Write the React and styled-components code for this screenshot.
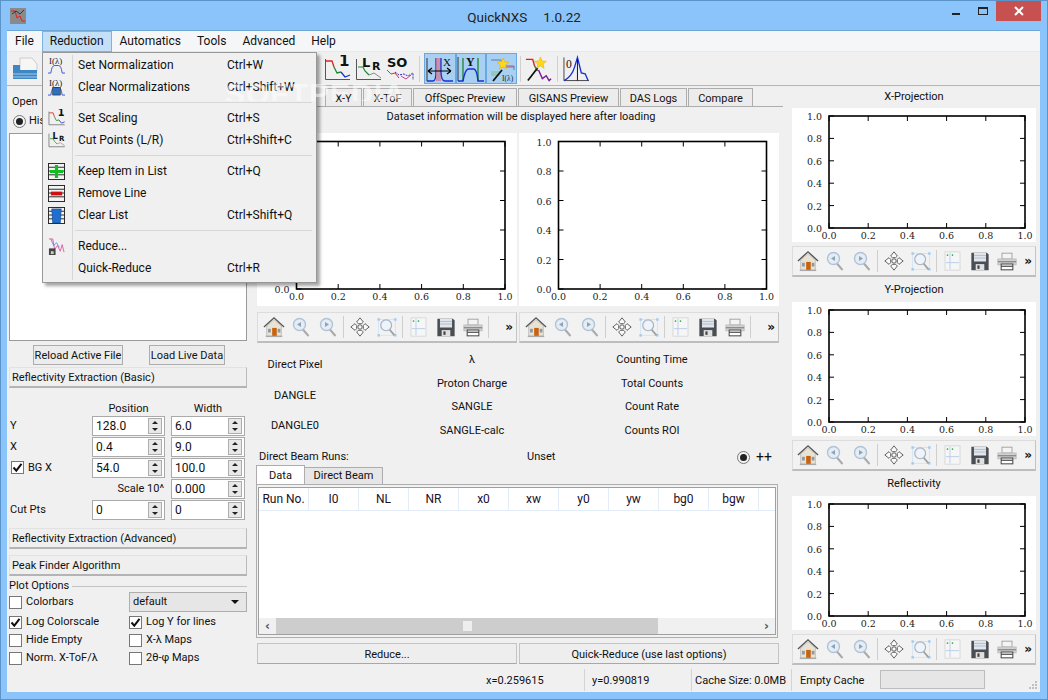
import React from "react";
import styled, { createGlobalStyle } from "styled-components";

const Global = createGlobalStyle`
  html, body { margin: 0; padding: 0; background: #8ac4fa; overflow: hidden; }
  * { box-sizing: border-box; }
`;

const UI = `Roboto, "Open Sans", "Liberation Sans", sans-serif`;

const Window = styled.div`
  position: relative;
  width: 1048px;
  height: 700px;
  background: #8ac4fa;
  border: 1px solid #5b94c8;
  display: flex;
  flex-direction: column;
  font: 11px/16px ${UI};
  color: #111;
  overflow: hidden;
`;
const TitleBar = styled.div`
  height: 29px;
  flex: none;
  display: flex;
  align-items: flex-start;
  position: relative;
`;
const AppIcon = styled.div`
  margin: 7px 0 0 9px;
  width: 16px;
  height: 16px;
  background: #8a8a8a;
  display: flex;
`;
const Title = styled.div`
  position: absolute;
  left: 0;
  right: 0;
  top: 6px;
  text-align: center;
  font-size: 13.5px;
  line-height: 20px;
  word-spacing: 2px;
  color: #222;
  white-space: pre;
`;
const Controls = styled.div`
  margin-left: auto;
  margin-right: 6px;
  display: flex;
  align-items: flex-start;
`;
const WinBtn = styled.div`
  width: 27px;
  height: 20px;
  display: flex;
  align-items: center;
  justify-content: center;
`;
const CloseBtn = styled(WinBtn)`
  width: 45px;
  background: #c75050;
`;
const Client = styled.div`
  margin: 0 7px 0 6px;
  height: 662px;
  background: #f0f0f0;
  display: flex;
  flex-direction: column;
  border-top: 1px solid #6fa5d5;
  position: relative;
`;
const MenuBar = styled.div`
  height: 21px;
  flex: none;
  background: #f5f6f7;
  border-bottom: 1px solid #e8e9ea;
  display: flex;
  font-size: 12px;
`;
const MenuTitle = styled.div`
  padding: 0 7px;
  line-height: 19px;
  height: 21px;
  border: 1px solid ${p => (p.$active ? "#7eb4e2" : "transparent")};
  background: ${p => (p.$active ? "#c4e0f8" : "transparent")};
`;
const ToolBar = styled.div`
  height: 34px;
  flex: none;
  border-bottom: 1px solid #b5b5b5;
  display: flex;
  align-items: center;
  padding-left: 5px;
`;
const ToolBtn = styled.div`
  width: ${p => p.$w || 31}px;
  height: 31px;
  flex: none;
  display: flex;
  align-items: center;
  justify-content: center;
  border: 1px solid ${p => (p.$on ? "#6aa9e0" : "transparent")};
  background: ${p => (p.$on ? "#a8d0f2" : "transparent")};
`;
const ToolSep = styled.div`
  width: 1px;
  height: 26px;
  background: #d0d0d0;
  margin: 0 ${p => p.$m || 4}px;
  flex: none;
`;
const ToolGap = styled.div`
  width: ${p => p.$w}px;
  flex: none;
`;
const Main = styled.div`
  flex: 1;
  display: flex;
  min-height: 0;
`;

/* Left column */
const LeftCol = styled.div`
  width: 245px;
  flex: none;
  padding: 7px 0 0 2px;
  display: flex;
  flex-direction: column;
`;
const OpenLabel = styled.div`
  height: 16px;
  line-height: 18px;
  padding-left: 3px;
`;
const RadioRow = styled.div`
  height: 16px;
  margin-top: 4px;
  padding-left: 4px;
  display: flex;
  align-items: center;
  gap: 3px;
`;
const Radio = styled.span`
  width: 13px;
  height: 13px;
  flex: none;
  border-radius: 50%;
  border: 1px solid #777;
  background: #f4f4f4;
  display: flex;
  align-items: center;
  justify-content: center;
  &::after {
    content: "";
    width: 7px;
    height: 7px;
    border-radius: 50%;
    background: #222;
  }
`;
const ListBox = styled.div`
  margin-top: 4px;
  width: 238px;
  height: 212px;
  background: #fff;
  border: 1px solid #9a9a9a;
`;
const ReloadRow = styled.div`
  display: flex;
  margin-top: 4px;
  padding-left: 24px;
  gap: 26px;
`;
const PushBtn = styled.div`
  height: ${p => p.$h || 21}px;
  width: ${p => (p.$w ? p.$w + "px" : "auto")};
  flex: ${p => (p.$w ? "none" : "1")};
  border: 1px solid #adadad;
  background: #ececec;
  display: flex;
  align-items: center;
  justify-content: ${p => (p.$left ? "flex-start" : "center")};
  padding: 2px ${p => (p.$left ? 2 : 0)}px 0;
  white-space: nowrap;
`;
const SectionBtn = styled(PushBtn)`
  width: 238px;
  flex: none;
  margin-top: ${p => p.$mt || 0}px;
  border-style: solid;
  border-width: 1px 1px 2px 1px;
  border-color: #e2e2e2 #bbb #b4b4b4 #e2e2e2;
  background: #efefef;
`;
const FormHead = styled.div`
  display: grid;
  grid-template-columns: 77px 73px 74px;
  column-gap: 6px;
  margin-top: 12px;
  height: 16px;
`;
const HeadCell = styled.div`
  text-align: center;
  height: 16px;
  line-height: 18px;
  grid-column: ${p => p.$col};
`;
const FormGrid = styled.div`
  display: grid;
  grid-template-columns: 77px 73px 74px;
  column-gap: 6px;
  grid-auto-rows: 20px;
  row-gap: 1px;
  align-items: center;
`;
const FieldLabel = styled.div`
  padding-left: 1px;
  display: flex;
  align-items: center;
  gap: 4px;
  margin-top: -1px;
`;
const BoxLabel = styled(FieldLabel)`
  padding-left: 2px;
`;
const ScaleLabel = styled.div`
  grid-column: 1 / span 2;
  text-align: right;
  padding-right: 1px;
  margin-top: -1px;
`;
const Spin = styled.div`
  height: 20px;
  border: 1px solid #aaa;
  background: #fff;
  display: flex;
  align-items: center;
  padding-left: 3px;
  font-size: 12px;
  justify-content: space-between;
`;
const SpinBtns = styled.div`
  width: 14px;
  height: 16px;
  margin-right: 2px;
  border: 1px solid #adadad;
  background: #e8e8e8;
  display: flex;
  flex-direction: column;
  align-items: center;
  justify-content: space-around;
`;
const Arrow = styled.span`
  width: 0;
  height: 0;
  border-left: 3px solid transparent;
  border-right: 3px solid transparent;
  ${p => (p.$down ? "border-top: 3px solid #222;" : "border-bottom: 3px solid #222;")}
`;
const GroupTitle = styled.div`
  margin-top: 2px;
  height: 16px;
  display: flex;
  align-items: center;
  gap: 3px;
  width: 238px;
  &::after {
    content: "";
    flex: 1;
    height: 1px;
    background: #c4c4c4;
  }
`;
const OptGrid = styled.div`
  display: grid;
  grid-template-columns: 120px 118px;
  grid-template-rows: 22px 18px 18px 18px;
  margin-top: -3px;
  align-items: center;
`;
const CheckItem = styled.div`
  display: flex;
  align-items: center;
  gap: 4px;
  white-space: nowrap;
`;
const Box = styled.span`
  width: 13px;
  height: 13px;
  flex: none;
  background: #fff;
  border: 1px solid #777;
  display: flex;
  align-items: center;
  justify-content: center;
`;
const Combo = styled.div`
  height: 20px;
  border: 1px solid #adadad;
  background: #e6e6e6;
  display: flex;
  align-items: center;
  justify-content: space-between;
  padding: 0 7px 0 3px;
`;
const ComboArrow = styled.span`
  border-left: 4px solid transparent;
  border-right: 4px solid transparent;
  border-top: 4px solid #111;
`;

/* Centre column */
const CenterCol = styled.div`
  width: 533px;
  flex: none;
  padding: 2px 0 0 5px;
  display: flex;
  flex-direction: column;
`;
const TabBar = styled.div`
  height: 19px;
  width: 526px;
  padding-left: ${p => p.$pad || 0}px;
  border-bottom: 1px solid #adadad;
  display: flex;
  flex: none;
`;
const Tab = styled.div`
  height: 18px;
  width: ${p => p.$w}px;
  flex: none;
  border: 1px solid #adadad;
  border-bottom: none;
  margin-right: 1px;
  background: #ececec;
  display: flex;
  align-items: center;
  justify-content: center;
  padding-top: 2px;
  white-space: nowrap;
`;
const InfoLine = styled.div`
  height: 18px;
  text-align: center;
  line-height: 20px;
  flex: none;
`;
const PlotRow = styled.div`
  display: flex;
  gap: 2px;
  margin-top: ${p => p.$mt || 0}px;
`;
const PlotSvg = styled.svg`
  display: block;
  background: #fff;
  flex: none;
`;
const TickText = styled.text`
  font: 9.5px "DejaVu Serif", serif;
  fill: #222;
  stroke: none;
`;
const Mpl = styled.div`
  width: ${p => p.$w}px;
  height: 31px;
  flex: none;
  background: #f2f2f2;
  border: 1px solid #dcdcdc;
  border-bottom: 2px solid #bdbdbd;
  border-right: 1px solid #c4c4c4;
  display: flex;
  align-items: center;
  padding-left: ${p => p.$pad}px;
`;
const MplBtn = styled.div`
  width: 27px;
  height: 26px;
  flex: none;
  display: flex;
  align-items: center;
  justify-content: center;
`;
const MplSep = styled.div`
  width: 1px;
  height: 22px;
  margin: 0 2px;
  background: #cfcfcf;
  flex: none;
`;
const More = styled.div`
  margin-left: auto;
  margin-right: 3px;
  font: bold 12px/14px "DejaVu Sans", sans-serif;
`;
const InfoGrid = styled.div`
  display: grid;
  grid-template-columns: 76px 278px 82px;
  height: 95px;
  flex: none;
  margin-top: 4px;
`;
const InfoCol = styled.div`
  padding-top: ${p => p.$top}px;
  display: flex;
  flex-direction: column;
  align-items: center;
`;
const InfoItem = styled.div`
  height: ${p => p.$h}px;
  line-height: ${p => p.$h}px;
  white-space: nowrap;
`;
const BeamRow = styled.div`
  height: 16px;
  display: flex;
  align-items: center;
  padding: 0 7px 0 2px;
  width: 522px;
  margin-top: 7px;
  flex: none;
`;
const BeamText = styled.div`
  width: ${p => p.$w}px;
  flex: none;
`;
const BeamRadio = styled.div`
  margin-left: auto;
  display: flex;
  align-items: center;
  gap: 6px;
  font-size: 14px;
`;
const SmallTabs = styled.div`
  display: flex;
  height: 20px;
  margin: 0 0 0 -1px;
  align-items: flex-end;
  flex: none;
`;
const SmallTab = styled.div`
  height: ${p => (p.$on ? 20 : 18)}px;
  width: ${p => p.$w}px;
  border: 1px solid #adadad;
  border-bottom: ${p => (p.$on ? "none" : "1px solid #adadad")};
  background: ${p => (p.$on ? "#fff" : "#e6e6e6")};
  display: flex;
  align-items: center;
  justify-content: center;
  margin-left: ${p => (p.$on ? 0 : -1)}px;
`;
const Pane = styled.div`
  width: 522px;
  height: 154px;
  margin: -1px 0 0 -1px;
  border: 1px solid #adadad;
  background: #f2f2f2;
  padding: 2px 1px 2px 1px;
  flex: none;
`;
const TableFrame = styled.div`
  height: 148px;
  border: 1px solid #9f9f9f;
  background: #fff;
  display: flex;
  flex-direction: column;
  overflow: hidden;
`;
const TableHead = styled.div`
  height: 23px;
  flex: none;
  display: flex;
  border-bottom: 1px solid #e3edf8;
  font-size: 12px;
`;
const HeadC = styled.div`
  width: 50px;
  flex: none;
  border-right: 1px solid #e3edf8;
  text-align: center;
  line-height: 23px;
  white-space: nowrap;
  color: #20102a;
`;
const TableBody = styled.div`
  flex: 1;
`;
const HScroll = styled.div`
  height: 16px;
  flex: none;
  background: #f0f0f0;
  display: flex;
  align-items: center;
`;
const ScrollEnd = styled.div`
  width: 17px;
  flex: none;
  display: flex;
  justify-content: center;
  font: bold 12px/14px "DejaVu Sans", sans-serif;
  color: #555;
  margin-left: ${p => (p.$end ? "auto" : 0)};
`;
const Thumb = styled.div`
  width: 382px;
  height: 16px;
  flex: none;
  background: #cdcdcd;
  display: flex;
  align-items: center;
  justify-content: center;
  &::after {
    content: "";
    width: 9px;
    height: 10px;
    background: #eee;
  }
`;
const ReduceRow = styled.div`
  display: flex;
  gap: 2px;
  margin-top: 5px;
  width: 522px;
`;
const WideBtn = styled(PushBtn)`
  border-color: #c4c4c4 #c4c4c4 #a8a8a8;
  background: #eee;
`;

/* Right column */
const RightCol = styled.div`
  flex: 1;
  padding-left: 7px;
  display: flex;
  flex-direction: column;
`;
const PlotHead = styled.div`
  width: 244px;
  height: 16px;
  line-height: 18px;
  margin-top: ${p => p.$mt}px;
  margin-bottom: ${p => p.$mb}px;
  text-align: center;
  flex: none;
`;
const Gap = styled.div`
  height: ${p => p.$h}px;
  flex: none;
`;

/* Status */
const StatusBar = styled.div`
  height: 25px;
  flex: none;
  display: flex;
  align-items: center;
  position: relative;
`;
const StatusCell = styled.div`
  width: ${p => p.$w}px;
  height: 22px;
  flex: none;
  padding-left: ${p => p.$pad}px;
  line-height: 24px;
  border-right: 1px solid ${p => (p.$plain ? "transparent" : "#d4d4d4")};
  white-space: nowrap;
`;
const Progress = styled.div`
  width: 105px;
  height: 19px;
  flex: none;
  background: #e6e6e6;
  border: 1px solid #bcbcbc;
`;
const Grip = styled.svg`
  margin-left: auto;
  margin-right: 2px;
  margin-top: 10px;
  flex: none;
`;

/* Dropdown */
const Menu = styled.div`
  position: absolute;
  left: 35px;
  top: 21px;
  width: 275px;
  height: 231px;
  background: #f0f0f0;
  border: 1px solid #979797;
  box-shadow: 3px 3px 3px rgba(0, 0, 0, 0.35);
  padding: 1px 2px;
  font-size: 12px;
  z-index: 5;
  &::before {
    content: "";
    position: absolute;
    left: 29px;
    top: 2px;
    bottom: 2px;
    width: 1px;
    background: #d7d7d7;
  }
`;
const MItem = styled.div`
  height: 22px;
  display: flex;
  align-items: center;
  white-space: nowrap;
`;
const MIcon = styled.div`
  width: 33px;
  padding-left: 3px;
  flex: none;
  display: flex;
  align-items: center;
`;
const MText = styled.div`
  width: 149px;
  flex: none;
`;
const MSep = styled.div`
  height: 1px;
  background: #d7d7d7;
  margin: 4px 2px 4px 30px;
`;
const Mark = styled.div`
  position: absolute;
  left: 218px;
  top: 46px;
  font: bold 30px/34px "Liberation Sans", sans-serif;
  color: rgba(255, 255, 255, 0.5);
  letter-spacing: 1px;
  z-index: 6;
  pointer-events: none;
  height: 24px;
  overflow: hidden;
`;

/* ---------- drawings ---------- */
const Plot = ({ w, h, l, t, r, b }) => {
  const v = [0, 0.2, 0.4, 0.6, 0.8, 1];
  return (
    <PlotSvg width={w} height={h}>
      <rect x={l} y={t} width={r - l} height={b - t} fill="#fff" stroke="#000" strokeWidth="1.6" />
      {v.map(x => {
        const px = l + (r - l) * x;
        const py = b - (b - t) * x;
        return (
          <g key={x} stroke="#000" strokeWidth="1">
            <line x1={px} x2={px} y1={b} y2={b - 5} />
            <line x1={px} x2={px} y1={t} y2={t + 5} />
            <line x1={l} x2={l + 5} y1={py} y2={py} />
            <line x1={r} x2={r - 5} y1={py} y2={py} />
            <TickText x={px} y={b + 11} textAnchor="middle">{x.toFixed(1)}</TickText>
            <TickText x={l - 7} y={py + 4} textAnchor="end">{x.toFixed(1)}</TickText>
          </g>
        );
      })}
    </PlotSvg>
  );
};

const Home = () => (
  <svg width="22" height="22" viewBox="0 0 24 24">
    <path d="M1 12 L12 2 L23 12" fill="none" stroke="#555" strokeWidth="1.5" />
    <path d="M4 11 L12 4 L20 11 V22 H4Z" fill="#e9e3d3" stroke="#aaa" strokeWidth=".7" />
    <rect x="10" y="13" width="5" height="9" fill="#c8620f" />
    <rect x="5.5" y="14" width="3" height="4" fill="#8a98a8" />
    <rect x="16" y="14" width="3" height="4" fill="#8a98a8" />
    <rect x="3" y="21.5" width="18" height="1.5" fill="#aaa" />
  </svg>
);
const Zoom = ({ fwd }) => (
  <svg width="18" height="20" viewBox="0 0 18 20">
    <line x1="10.5" y1="12" x2="16.5" y2="19" stroke="#aaa" strokeWidth="2" />
    <circle cx="7.5" cy="7.5" r="6" fill="#e4edf6" stroke="#b0c3d6" strokeWidth="1.4" />
    <path d={fwd ? "M6 5 L10 7.5 L6 10Z" : "M9 5 L5 7.5 L9 10Z"} fill="#8fa3b8" />
  </svg>
);
const Move = () => (
  <svg width="20" height="20" viewBox="0 0 24 24" fill="#fafafa" stroke="#555" strokeWidth="1.1">
    <path d="M12 1 L16 6 L14 8 H10 L8 6Z" />
    <path d="M12 23 L16 18 L14 16 H10 L8 18Z" />
    <path d="M1 12 L6 8 L8 10 V14 L6 16Z" />
    <path d="M23 12 L18 8 L16 10 V14 L18 16Z" />
    <circle cx="12" cy="12" r="2.6" />
  </svg>
);
const ZoomRect = () => (
  <svg width="20" height="20" viewBox="0 0 24 24">
    <rect x="2" y="3" width="20" height="19" fill="none" stroke="#d0e2f4" strokeWidth="1" />
    <g fill="#a5cbee">
      <rect x="0.5" y="1.5" width="3" height="3" />
      <rect x="20.5" y="1.5" width="3" height="3" />
      <rect x="0.5" y="20.5" width="3" height="3" />
      <rect x="20.5" y="20.5" width="3" height="3" />
    </g>
    <line x1="15" y1="15" x2="21" y2="22" stroke="#a0a0a0" strokeWidth="2.2" />
    <circle cx="11" cy="10" r="6.5" fill="#eef4fa" stroke="#a2b4c6" strokeWidth="1.4" />
  </svg>
);
const Subplot = () => (
  <svg width="17" height="20" viewBox="0 0 20 24">
    <rect x="1" y="1" width="18" height="22" fill="#f6f6f6" stroke="#d4d4d4" />
    <line x1="7" y1="2" x2="7" y2="22" stroke="#b0c8e8" />
    <line x1="2" y1="14" x2="18" y2="14" stroke="#b0c8e8" />
    <path d="M3 5 h2 M9 5 h2 M4 4v2 M10 4v2" stroke="#33c055" strokeWidth="1.2" />
  </svg>
);
const Save = () => (
  <svg width="18" height="19" viewBox="0 0 20 22">
    <path d="M0 1 H18 L20 3 V21 H0Z" fill="#4a4d52" />
    <rect x="3" y="1" width="14" height="10" fill="#e2e6ec" />
    <path d="M3 4 H17 M3 7 H17" stroke="#a8bcd2" strokeWidth="1" />
    <rect x="5" y="14" width="10" height="7" fill="#e0e0e0" />
    <rect x="7" y="15.5" width="2.5" height="4" fill="#444" />
  </svg>
);
const Print = () => (
  <svg width="20" height="19" viewBox="0 0 24 22">
    <rect x="6" y="1" width="12" height="7" fill="#f4f4f4" stroke="#999" />
    <rect x="1" y="8" width="22" height="7" fill="#d0d0d0" stroke="#bbb" />
    <rect x="1" y="10.5" width="22" height="1.5" fill="#888" />
    <rect x="5" y="14" width="14" height="7" fill="#fff" stroke="#444" strokeWidth="1.2" />
    <rect x="5" y="16" width="14" height="1.4" fill="#444" />
  </svg>
);

const MplBar = ({ w, pad, last }) => (
  <Mpl $w={w} $pad={pad}>
    <MplBtn><Home /></MplBtn>
    <MplBtn><Zoom /></MplBtn>
    <MplBtn><Zoom fwd /></MplBtn>
    <MplSep />
    <MplBtn><Move /></MplBtn>
    <MplBtn><ZoomRect /></MplBtn>
    <MplSep />
    <MplBtn><Subplot /></MplBtn>
    <MplBtn><Save /></MplBtn>
    <MplBtn><Print /></MplBtn>
    {last && <MplSep />}
    <More>»</More>
  </Mpl>
);

const serif = "'Liberation Serif', serif";
const sans = "'DejaVu Sans', sans-serif";

const AxesL = () => <path d="M1.5 4 V24.5 H26" fill="none" stroke="#555" strokeWidth="1" />;
const IconScale = ({ s = 28 }) => (
  <svg width={s} height={s} viewBox="0 0 28 28">
    <AxesL />
    <path d="M2 6 H8 L10 12" fill="none" stroke="#e02020" strokeWidth="1.3" />
    <path d="M10 12 L13 18 L17 17" fill="none" stroke="#1a8a2a" strokeWidth="1.3" />
    <path d="M17 17 L21 22 L26 20" fill="none" stroke="#2030d0" strokeWidth="1.3" />
    <text x="15" y="11" fontSize="15" fontWeight="bold" fontFamily={sans} fill="#111">1</text>
  </svg>
);
const IconLR = ({ s = 28 }) => (
  <svg width={s} height={s} viewBox="0 0 28 28">
    <AxesL />
    <path d="M3 12 H8 L10 16 L14 20" fill="none" stroke="#1a8a2a" strokeWidth="1.2" />
    <path d="M14 20 L19 18 L26 23" fill="none" stroke="#888" strokeWidth="1" />
    <text x="7" y="12" fontSize="13" fontWeight="bold" fontFamily={sans} fill="#111">L</text>
    <text x="17" y="15" fontSize="11" fontWeight="bold" fontFamily={sans} fill="#111">R</text>
  </svg>
);
const IconSO = () => (
  <svg width="28" height="28" viewBox="0 0 28 28">
    <text x="1" y="12" fontSize="13" fontWeight="bold" fontFamily={sans} fill="#111">SO</text>
    <path d="M1 15 L5 19 L9 18 L13 23" fill="none" stroke="#e03030" strokeWidth="1" />
    <path d="M9 17 L13 20 L18 19 L22 21 L27 18 L27 25" fill="none" stroke="#3030c0" strokeWidth="1" strokeDasharray="2 1" />
    <path d="M15 21 L20 24 L25 20" fill="none" stroke="#c040a0" strokeWidth="1" />
  </svg>
);
const IconX = () => (
  <svg width="28" height="28" viewBox="0 0 28 28">
    <path d="M1 26 H7 Q10 26 10 16 V3" fill="none" stroke="#1a30d0" strokeWidth="1.3" />
    <rect x="10" y="3" width="5" height="23" fill="#cf7d96" opacity=".75" />
    <path d="M15 3 V16 Q15 26 19 26 H27" fill="none" stroke="#1a30d0" strokeWidth="1.3" />
    <path d="M2 16 H25 M2 16 L6 13 M2 16 L6 19 M25 16 L21 13 M25 16 L21 19" stroke="#000" strokeWidth="1.2" fill="none" />
    <line x1="1" y1="3" x2="1" y2="26" stroke="#333" />
    <text x="17" y="11" fontSize="11" fontFamily={serif} fill="#111">X</text>
  </svg>
);
const IconY = () => (
  <svg width="28" height="28" viewBox="0 0 28 28">
    <path d="M1 2 V26" stroke="#333" />
    <path d="M6 3 V26 M21 3 V26" stroke="#2a8a3a" strokeWidth="1.4" />
    <path d="M1 26 H6 Q8 15 11 14 H17 Q20 15 21 26 H27" fill="none" stroke="#1a30d0" strokeWidth="1.4" />
    <text x="9" y="11" fontSize="12" fontWeight="bold" fontFamily={serif} fill="#111">Y</text>
  </svg>
);
const Star = ({ x, y, r = 6 }) => {
  const pts = [];
  for (let i = 0; i < 10; i++) {
    const a = (Math.PI / 5) * i - Math.PI / 2;
    const rr = i % 2 ? r * 0.45 : r;
    pts.push(`${(x + rr * Math.cos(a)).toFixed(1)},${(y + rr * Math.sin(a)).toFixed(1)}`);
  }
  return <polygon points={pts.join(" ")} fill="#ffd91a" stroke="#e0a800" strokeWidth=".5" />;
};
const IconWand = () => (
  <svg width="28" height="28" viewBox="0 0 28 28">
    <path d="M3 5 H13 L16 11 H26 V15" fill="none" stroke="#5a78c8" strokeWidth="1" />
    <rect x="3" y="16" width="9" height="5" fill="#88c8a0" opacity=".7" />
    <path d="M16 12 H26" stroke="#e05050" strokeWidth="1" />
    <line x1="5" y1="26" x2="14" y2="15" stroke="#111" strokeWidth="1.8" />
    <Star x={15} y={9} r={6} />
    <text x="14" y="26" fontSize="7.5" fontFamily={serif} fill="#222">I(λ)</text>
  </svg>
);
const IconAuto = () => (
  <svg width="28" height="28" viewBox="0 0 28 28">
    <path d="M1 4 H8 L10 11" fill="none" stroke="#e02020" strokeWidth="1.5" />
    <path d="M10 11 L13 16" fill="none" stroke="#1a8a2a" strokeWidth="1.5" />
    <path d="M14 15 L18 24 L22 21 L25 26 L27 24" fill="none" stroke="#7a1a9a" strokeWidth="1.5" />
    <line x1="3" y1="26" x2="13" y2="13" stroke="#111" strokeWidth="1.8" />
    <Star x={16} y={8} r={6.5} />
  </svg>
);
const IconZero = () => (
  <svg width="28" height="28" viewBox="0 0 28 28">
    <path d="M1 2 V26 H27" fill="none" stroke="#444" />
    <path d="M1 26 Q9 22 12 12 L15 2 L19 18 L23 19 L26 26" fill="none" stroke="#1a30d0" strokeWidth="1.4" />
    <line x1="15" y1="4" x2="15" y2="26" stroke="#111" />
    <text x="3" y="13" fontSize="12" fontFamily={serif} fill="#111">0</text>
  </svg>
);
const IconOpen = () => (
  <svg width="26" height="24" viewBox="0 0 26 24">
    <path d="M8 1 H20 L25 7 V14 H8Z" fill="#f6f6f6" stroke="#ccc" />
    <path d="M1 8 H8 V13 H25 V22 H1Z" fill="#3f87c4" />
    <path d="M1 17 H25 M1 20 H25" stroke="#9ecbec" />
  </svg>
);
const IconIL = ({ trash }) => (
  <svg width="17" height="17" viewBox="0 0 18 18">
    <text x="1" y="7.5" fontSize="9.5" fontFamily={serif} fill="#222">I(λ)</text>
    <path d="M0 17 H3 Q4 9 7 9 H11 Q14 9 15 17 H18" fill="none" stroke="#3a50d0" strokeWidth="1" />
    {trash && <rect x="5" y="9" width="8" height="8" fill="#2a6fc0" stroke="#123" strokeWidth=".6" />}
  </svg>
);
const IconList = ({ kind }) => (
  <svg width="17" height="17" viewBox="0 0 18 18">
    <rect x=".5" y=".5" width="17" height="17" fill="#f4f4f4" stroke="#222" />
    <path d="M1 4.5 H17 M1 8.5 H17 M1 12.5 H17" stroke="#222" />
    {kind === "add" && <path d="M9 2 V16 M2 9 H16" stroke="#10c020" strokeWidth="3.4" />}
    {kind === "rem" && <rect x="3" y="7" width="12" height="4" fill="#d01010" />}
    {kind === "bin" && <path d="M4 2 H14 L13 17 H5Z" fill="#1f6fd0" stroke="#0a3a80" strokeWidth=".6" />}
  </svg>
);
const IconReduce = () => (
  <svg width="17" height="17" viewBox="0 0 18 18">
    <path d="M1 1 H5 L7 12 L10 8 L13 14 L15 7 L17 15" fill="none" stroke="#e060a0" strokeWidth="1" />
    <path d="M3 1 L6 8 L9 5 L12 10" fill="none" stroke="#6070e0" strokeWidth=".8" />
    <rect x="1" y="11" width="7" height="7" fill="#444" />
    <rect x="3" y="14" width="3" height="3" fill="#ccc" />
  </svg>
);
const Check = () => (
  <svg width="11" height="11" viewBox="0 0 11 11">
    <path d="M1.5 5.5 L4.3 8.6 L9.5 1.8" fill="none" stroke="#111" strokeWidth="2" />
  </svg>
);

const SpinBox = ({ v }) => (
  <Spin>
    {v}
    <SpinBtns>
      <Arrow />
      <Arrow $down />
    </SpinBtns>
  </Spin>
);
const Opt = ({ on, children }) => (
  <CheckItem>
    <Box>{on && <Check />}</Box>
    {children}
  </CheckItem>
);

const tabs = [
  ["X-Y", 37], ["X-ToF", 49], ["OffSpec Preview", 104], ["GISANS Preview", 101], ["DAS Logs", 67], ["Compare", 65],
];
const cols = ["I0", "NL", "NR", "x0", "xw", "y0", "yw", "bg0", "bgw"];

export default function App() {
  return (
    <Window>
      <Global />
      <TitleBar>
        <AppIcon>
          <svg width="16" height="16" viewBox="0 0 16 16">
            <path d="M1 3 H5 L7 10 L10 8 L12 13 H15" fill="none" stroke="#e02020" strokeWidth="1" />
            <path d="M2 6 L6 3 L10 6 L14 2" fill="none" stroke="#222" strokeWidth=".8" />
          </svg>
        </AppIcon>
        <Title>QuickNXS   1.0.22</Title>
        <Controls>
          <WinBtn>
            <svg width="10" height="10" viewBox="0 0 10 10"><rect x="1" y="7" width="8" height="2" fill="#222" /></svg>
          </WinBtn>
          <WinBtn>
            <svg width="10" height="8" viewBox="0 0 10 8"><rect x=".5" y=".5" width="9" height="7" fill="none" stroke="#222" /><rect x="0" y="0" width="10" height="2" fill="#222" /></svg>
          </WinBtn>
          <CloseBtn>
            <svg width="10" height="10" viewBox="0 0 10 10"><path d="M1 1 L9 9 M9 1 L1 9" stroke="#fff" strokeWidth="2" /></svg>
          </CloseBtn>
        </Controls>
      </TitleBar>
      <Client>
        <MenuBar>
          <MenuTitle>File</MenuTitle>
          <MenuTitle $active>Reduction</MenuTitle>
          <MenuTitle>Automatics</MenuTitle>
          <MenuTitle>Tools</MenuTitle>
          <MenuTitle>Advanced</MenuTitle>
          <MenuTitle>Help</MenuTitle>
        </MenuBar>
        <ToolBar>
          <IconOpen />
          <ToolGap $w={284} />
          <ToolBtn><IconScale /></ToolBtn>
          <ToolBtn><IconLR /></ToolBtn>
          <ToolBtn><IconSO /></ToolBtn>
          <ToolSep $m={4} />
          <ToolBtn $on $w={32}><IconX /></ToolBtn>
          <ToolBtn $on $w={30}><IconY /></ToolBtn>
          <ToolBtn $on $w={31}><IconWand /></ToolBtn>
          <ToolSep $m={3} />
          <ToolBtn $w={29}><IconAuto /></ToolBtn>
          <ToolSep $m={4} />
          <ToolBtn $w={29}><IconZero /></ToolBtn>
        </ToolBar>
        <Main>
          <LeftCol>
            <OpenLabel>Open</OpenLabel>
            <RadioRow><Radio />Histogram</RadioRow>
            <ListBox />
            <ReloadRow>
              <PushBtn $w={90} $h={20}>Reload Active File</PushBtn>
              <PushBtn $w={76} $h={20}>Load Live Data</PushBtn>
            </ReloadRow>
            <SectionBtn $left $mt={2}>Reflectivity Extraction (Basic)</SectionBtn>
            <FormHead>
              <HeadCell $col={2}>Position</HeadCell>
              <HeadCell $col={3}>Width</HeadCell>
            </FormHead>
            <FormGrid>
              <FieldLabel>Y</FieldLabel><SpinBox v="128.0" /><SpinBox v="6.0" />
              <FieldLabel>X</FieldLabel><SpinBox v="0.4" /><SpinBox v="9.0" />
              <BoxLabel><Box><Check /></Box>BG X</BoxLabel><SpinBox v="54.0" /><SpinBox v="100.0" />
              <ScaleLabel>Scale 10^</ScaleLabel><SpinBox v="0.000" />
              <FieldLabel>Cut Pts</FieldLabel><SpinBox v="0" /><SpinBox v="0" />
            </FormGrid>
            <SectionBtn $left $mt={8}>Reflectivity Extraction (Advanced)</SectionBtn>
            <SectionBtn $left $mt={6}>Peak Finder Algorithm</SectionBtn>
            <GroupTitle>Plot Options</GroupTitle>
            <OptGrid>
              <Opt>Colorbars</Opt>
              <Combo>default<ComboArrow /></Combo>
              <Opt on>Log Colorscale</Opt>
              <Opt on>Log Y for lines</Opt>
              <Opt>Hide Empty</Opt>
              <Opt>X-λ Maps</Opt>
              <Opt>Norm. X-ToF/λ</Opt>
              <Opt>2θ-φ Maps</Opt>
            </OptGrid>
          </LeftCol>
          <CenterCol>
            <TabBar $pad={68}>
              {tabs.map(([t, w]) => <Tab key={t} $w={w}>{t}</Tab>)}
            </TabBar>
            <InfoLine>Dataset information will be displayed here after loading</InfoLine>
            <PlotRow $mt={8}>
              <Plot w={260} h={173} l={39.5} t={8.5} r={248} b={156} />
              <Plot w={260} h={173} l={39.5} t={8.5} r={247.5} b={156} />
            </PlotRow>
            <PlotRow $mt={6}>
              <MplBar w={260} pad={2} last />
              <MplBar w={260} pad={2} last />
            </PlotRow>
            <InfoGrid>
              <InfoCol $top={3}>
                <InfoItem $h={30.5}>Direct Pixel</InfoItem>
                <InfoItem $h={30.5}>DANGLE</InfoItem>
                <InfoItem $h={30.5}>DANGLE0</InfoItem>
              </InfoCol>
              <InfoCol $top={1}>
                <InfoItem $h={23.5}>λ</InfoItem>
                <InfoItem $h={23.5}>Proton Charge</InfoItem>
                <InfoItem $h={23.5}>SANGLE</InfoItem>
                <InfoItem $h={23.5}>SANGLE-calc</InfoItem>
              </InfoCol>
              <InfoCol $top={1}>
                <InfoItem $h={23.5}>Counting Time</InfoItem>
                <InfoItem $h={23.5}>Total Counts</InfoItem>
                <InfoItem $h={23.5}>Count Rate</InfoItem>
                <InfoItem $h={23.5}>Counts ROI</InfoItem>
              </InfoCol>
            </InfoGrid>
            <BeamRow>
              <BeamText $w={268}>Direct Beam Runs:</BeamText>
              <BeamText $w={60}>Unset</BeamText>
              <BeamRadio><Radio />++</BeamRadio>
            </BeamRow>
            <SmallTabs>
              <SmallTab $on $w={49}>Data</SmallTab>
              <SmallTab $w={79}>Direct Beam</SmallTab>
            </SmallTabs>
            <Pane>
              <TableFrame>
                <TableHead>
                  <HeadC>Run No.</HeadC>
                  {cols.map(c => <HeadC key={c}>{c}</HeadC>)}
                  <HeadC>D</HeadC>
                </TableHead>
                <TableBody />
                <HScroll>
                  <ScrollEnd>‹</ScrollEnd>
                  <Thumb />
                  <ScrollEnd $end>›</ScrollEnd>
                </HScroll>
              </TableFrame>
            </Pane>
            <ReduceRow>
              <WideBtn>Reduce...</WideBtn>
              <WideBtn>Quick-Reduce (use last options)</WideBtn>
            </ReduceRow>
          </CenterCol>
          <RightCol>
            <PlotHead $mt={2} $mb={4}>X-Projection</PlotHead>
            <Plot w={244} h={134} l={37} t={8} r={233} b={120} />
            <Gap $h={4} />
            <MplBar w={244} pad={1} />
            <PlotHead $mt={4} $mb={5}>Y-Projection</PlotHead>
            <Plot w={244} h={134} l={37} t={8} r={233} b={120} />
            <Gap $h={4} />
            <MplBar w={244} pad={1} />
            <PlotHead $mt={4} $mb={5}>Reflectivity</PlotHead>
            <Plot w={244} h={134} l={37} t={8} r={233} b={120} />
            <Gap $h={4} />
            <MplBar w={244} pad={1} />
          </RightCol>
        </Main>
        <StatusBar>
          <StatusCell $w={578} $pad={479}>x=0.259615</StatusCell>
          <StatusCell $w={107} $pad={7}>y=0.990819</StatusCell>
          <StatusCell $w={100} $pad={3}>Cache Size: 0.0MB</StatusCell>
          <StatusCell $w={88} $pad={8} $plain>Empty Cache</StatusCell>
          <Progress />
          <Grip width="10" height="10" viewBox="0 0 10 10" fill="#c0c0c0">
            <rect x="7" y="1" width="2" height="2" />
            <rect x="4" y="4" width="2" height="2" />
            <rect x="7" y="4" width="2" height="2" />
            <rect x="1" y="7" width="2" height="2" />
            <rect x="4" y="7" width="2" height="2" />
            <rect x="7" y="7" width="2" height="2" />
          </Grip>
        </StatusBar>
        <Menu>
          <MItem><MIcon><IconIL /></MIcon><MText>Set Normalization</MText>Ctrl+W</MItem>
          <MItem><MIcon><IconIL trash /></MIcon><MText>Clear Normalizations</MText>Ctrl+Shift+W</MItem>
          <MSep />
          <MItem><MIcon><IconScale s={18} /></MIcon><MText>Set Scaling</MText>Ctrl+S</MItem>
          <MItem><MIcon><IconLR s={18} /></MIcon><MText>Cut Points (L/R)</MText>Ctrl+Shift+C</MItem>
          <MSep />
          <MItem><MIcon><IconList kind="add" /></MIcon><MText>Keep Item in List</MText>Ctrl+Q</MItem>
          <MItem><MIcon><IconList kind="rem" /></MIcon><MText>Remove Line</MText></MItem>
          <MItem><MIcon><IconList kind="bin" /></MIcon><MText>Clear List</MText>Ctrl+Shift+Q</MItem>
          <MSep />
          <MItem><MIcon><IconReduce /></MIcon><MText>Reduce...</MText></MItem>
          <MItem><MIcon /><MText>Quick-Reduce</MText>Ctrl+R</MItem>
        </Menu>
        <Mark>SOFTPEDIA</Mark>
      </Client>
    </Window>
  );
}
